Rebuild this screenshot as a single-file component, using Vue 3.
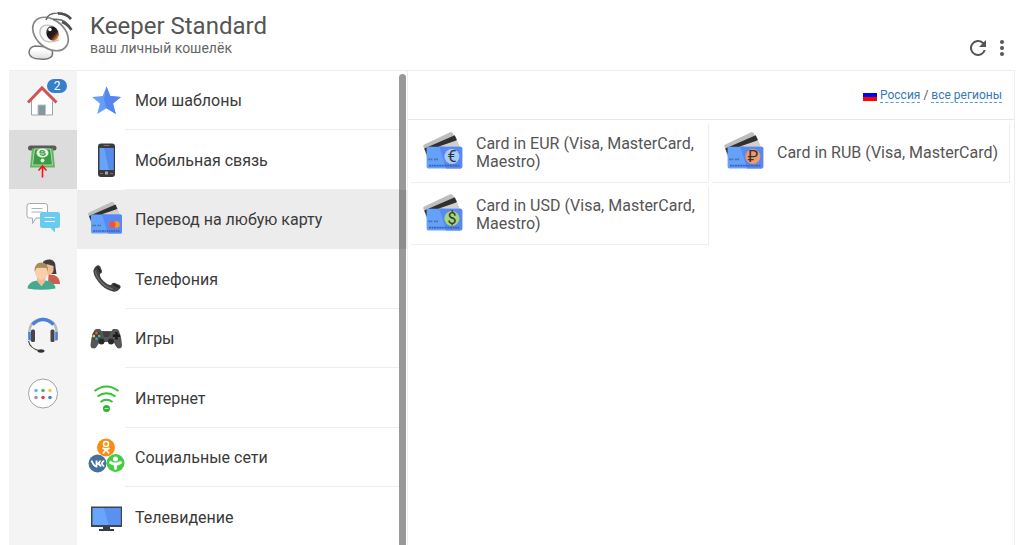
<template>
  <svg class="sprite" aria-hidden="true">
    <defs>
      <linearGradient id="eye" x1="0" y1="0" x2="0.4" y2="1">
        <stop offset="0" stop-color="#666" />
        <stop offset="0.4" stop-color="#161616" />
        <stop offset="0.75" stop-color="#33201a" />
        <stop offset="1" stop-color="#d9833a" />
      </linearGradient>
      <linearGradient id="belly" x1="0" y1="0" x2="0" y2="1">
        <stop offset="0.3" stop-color="#fff" />
        <stop offset="1" stop-color="#ddd" />
      </linearGradient>
    </defs>

    <symbol id="i-home" viewBox="0 0 40 40">
      <path d="M8.5 19 19 8.500 29.500 19V34H8.500Z" fill="#fff" />
      <path d="M8.500 20V34H29.500V20" fill="none" stroke="#9aa5ab" />
      <path d="M15 34V24H22.500V34" fill="#8797a0" stroke="#b6c0c5" />
      <path d="M5 21.500 19 7 33.500 21.500" fill="none" stroke="#d05454" stroke-width="3" />
    </symbol>
    <symbol id="i-pay" viewBox="0 0 40 40">
      <rect x="5" y="5.500" width="28.500" height="5" rx="2.500" fill="#5a5a5a" />
      <path d="M9 8.500H30L32 27.500H7Z" fill="#62b662" />
      <path d="M11.500 9H27.500L29.500 25H9.500Z" fill="#3f9a45" stroke="#a9dba5" />
      <ellipse cx="19.500" cy="13" rx="6" ry="4.500" fill="#e4f6df" />
      <path d="M22 11.500Q17 9.500 17 12.500 17 13 19.500 12.800 22.500 12.500 22 14.500 20 16 17 14.500" fill="none" stroke="#3f9a45" stroke-width="1.300" />
      <circle cx="19.500" cy="20.500" r="2" fill="#d6f0cf" />
      <path d="M19.500 37.500V25.500M15.500 30.500 19.500 26 23.500 30.500" fill="none" stroke="#f01616" stroke-width="1.600" />
    </symbol>
    <symbol id="i-chat" viewBox="0 0 40 40">
      <path d="M6.500 4.500H22Q24.500 4.500 24.500 7V16.500Q24.500 19 22 19H13L9.500 24.500V19H6.500Q4 19 4 16.500V7Q4 4.500 6.500 4.500Z" fill="#fff" stroke="#a3abb0" />
      <path d="M8.500 9.500H19.500M8.500 13H19.500" stroke="#a9b2b7" />
      <path d="M19.500 13H34.500Q37 13 37 15.500V26.500Q37 29 34.500 29H32V33.500L27.500 29H19.500Q17 29 17 26.500V15.500Q17 13 19.500 13Z" fill="#6bcbed" />
      <path d="M21.500 18.500H32M21.500 22.500H32" stroke="#e8f8fd" />
    </symbol>
    <symbol id="i-people" viewBox="0 0 40 40">
      <path d="M20 4Q22 1 27.500 1.500 33 3 32.500 9L33.500 16H20Z" fill="#403d3e" />
      <path d="M23.500 6 30.500 8V12Q30 16 26.500 16.500H23Z" fill="#eebd97" />
      <path d="M25.500 16.500 31 17Q36.500 18.500 37 26H25Z" fill="#ce5e4b" />
      <path d="M4.500 30.500Q5 24 14 22.500H23Q32 24 32.500 30.500 18.500 33 4.500 30.500Z" fill="#45a891" />
      <path d="M14 19H22.500V23L18.500 28.500 14 23Z" fill="#eebd97" />
      <path d="M12 9H24.500V15Q24 19.500 18.500 22.500 12.500 19.500 12 15Z" fill="#f9cfa9" />
      <path d="M11.500 14Q11 4.500 18.500 4.500 26 5 25 14L23.500 10Q18 9.500 13.500 10Z" fill="#a98d57" />
    </symbol>
    <symbol id="i-support" viewBox="0 0 40 40">
      <path d="M7 24Q3 2.500 20 2 37 2.500 33 24" fill="none" stroke="#b9bcbf" stroke-width="2.500" />
      <path d="M9.500 7.500Q20-2.500 30.500 7.500" fill="none" stroke="#4a7fdc" stroke-width="3.500" />
      <path d="M6.500 15V23M33.500 15V23" stroke="#4a7fdc" stroke-width="2.500" />
      <rect x="8" y="12.500" width="4" height="12.500" rx="1.500" fill="#4b4645" />
      <rect x="27.500" y="12.500" width="4" height="12.500" rx="1.500" fill="#4b4645" />
      <path d="M5.500 24Q7 31.500 16 33.500" fill="none" stroke="#505050" stroke-width="1.200" />
      <ellipse cx="18" cy="34" rx="3.500" ry="1.700" fill="#333" />
    </symbol>
    <symbol id="i-more" viewBox="0 0 40 40">
      <circle cx="20" cy="17.500" r="14.500" fill="#fff" stroke="#9ba4aa" />
      <circle cx="13" cy="14.500" r="1.800" fill="#5bc0e8" />
      <circle cx="20" cy="14.500" r="1.800" fill="#56b35a" />
      <circle cx="27" cy="14.500" r="1.800" fill="#f5c944" />
      <circle cx="13" cy="21.500" r="1.800" fill="#8f9aa1" />
      <circle cx="20" cy="21.500" r="1.800" fill="#cf4848" />
      <circle cx="27" cy="21.500" r="1.800" fill="#3a84cf" />
    </symbol>

    <symbol id="i-star" viewBox="0 0 40 40">
      <path d="M19.500 5.500 23.300 15 34 16 26 22.500 28.800 33 19.500 27.300 10.200 33 13 22.500 5 16 15.700 15Z" fill="#659ff8" />
      <path d="M19.500 5.500 23.300 15 34 16 26 22.500 28.800 33 19.500 27.300 17 19Z" fill="#5585ee" />
    </symbol>
    <symbol id="i-phone" viewBox="0 0 40 40">
      <rect x="11" y="3.500" width="17" height="33.500" rx="3" fill="#3b3b3d" />
      <rect x="12.500" y="8" width="14" height="22" fill="#67a5fa" />
      <path d="M17 8H26.500V30H22Z" fill="#568aed" />
      <path d="M16.500 5.500H22.500" stroke="#777" />
      <rect x="18" y="31.500" width="3" height="3" fill="#aaa" />
      <path d="M13 33.500H16M23 33.500H26" stroke="#777" />
    </symbol>
    <symbol id="i-card" viewBox="0 0 40 40">
      <path d="M1 14Q1 13 2 12.500L24.500 2Q26 1.500 27 3L33 15.500 4 23Z" fill="#bdbdbd" />
      <path d="M2 16 28.500 4.500 30.500 9 4 21Z" fill="#303030" />
      <path d="M14 14.500 30.500 9 33 15Z" fill="#d0d0d0" />
      <rect x="4" y="14.500" width="31" height="19" rx="1.500" fill="#64a1fb" />
      <path d="M15 14.500H33.500Q35 14.500 35 16V32Q35 33.500 33.500 33.500H21Z" fill="#5a88f2" />
      <path d="M5.500 25.500H9M10.500 25.500H14.500" stroke="#456fa9" stroke-width="1.500" stroke-dasharray="1.500 0.500" />
      <path d="M6 31H33" stroke="#3f64a8" stroke-width="1.500" stroke-dasharray="2 0.500 1.500 0.500" />
    </symbol>
    <symbol id="i-transfer" viewBox="0 0 40 40">
      <use href="#i-card" width="40" height="40" />
      <circle cx="29.500" cy="24.500" r="3.200" fill="#f79a1f" />
      <circle cx="25.300" cy="24.500" r="3.200" fill="#ee5240" />
    </symbol>
    <symbol id="i-handset" viewBox="0 0 40 40">
      <path d="M10 6.500Q12.500 5.500 13.500 8L15 12Q15.500 14 13 15 12.500 18.500 17 22.500 21.500 26.500 24 26 25.500 23 28 24L32.500 26Q34.500 27.500 33 29.500 30 33.500 26 32.500 17 30.500 11.500 23 5.500 15.500 6.500 11 7.500 7.500 10 6.500Z" fill="#444" />
      <path d="M8.500 12Q9 18 15 24 20 29 26 30" fill="none" stroke="#707070" stroke-width="1.200" />
      <path d="M10.500 8 13.500 13.500M26.500 25.500 32.500 28.500" stroke="#222" stroke-width="1.500" />
    </symbol>
    <symbol id="i-games" viewBox="0 0 40 40">
      <path d="M7 12Q7.500 10 10 10H13L14.500 12H24.500L26 10H29Q31.500 10 32 12 34.500 18 35 26 35 29.500 32 29.500 30 29.500 28.500 26.500L26.500 23H12.500L10.500 26.500Q9 29.500 7 29.500 3.500 29.500 3.500 26 4 18 7 12Z" fill="#555657" />
      <path d="M15.500 13H23.500L22 18H17Z" fill="#3f4041" />
      <circle cx="14.500" cy="22.500" r="3" fill="#29292b" />
      <circle cx="24" cy="22.500" r="3" fill="#29292b" />
      <circle cx="9.500" cy="17" r="4.500" fill="#3c3d3e" />
      <circle cx="9.500" cy="14" r="1.500" fill="#e65549" />
      <circle cx="6.800" cy="17" r="1.500" fill="#f3c33b" />
      <circle cx="12.200" cy="17" r="1.500" fill="#4fb960" />
      <circle cx="9.500" cy="19.800" r="1.500" fill="#489de8" />
      <path d="M29.500 13V20.500M25.800 16.800H33.200" stroke="#1c1c1d" stroke-width="2.500" />
    </symbol>
    <symbol id="i-wifi" viewBox="0 0 40 40">
      <path d="M7.500 13Q19.500 4 31.500 13M10.500 18.500Q19.500 12 28.500 18.500M13.500 24Q19.500 19.500 25.500 24" fill="none" stroke="#35c335" stroke-width="2" />
      <circle cx="19.500" cy="30.500" r="3.500" fill="#2fb52f" />
      <path d="M17.500 30.500H21.500" stroke="#b4eab4" />
    </symbol>
    <symbol id="i-social" viewBox="0 0 40 40">
      <circle cx="19" cy="9.500" r="9" fill="#fa8c14" />
      <circle cx="19" cy="6" r="2.500" fill="none" stroke="#fff" stroke-width="1.600" />
      <path d="M15.500 10Q19 12.500 22.500 10M19 11.500 16 15.500M19 11.500 22 15.500" fill="none" stroke="#fff" stroke-width="1.800" />
      <circle cx="10.500" cy="25.500" r="9" fill="#45709c" />
      <path d="M4.500 22.500Q6.500 28 9.500 28.500V22.500M10 26Q12.500 25 13.500 22.500M10 25.500Q12.500 25.500 14 28.500M14.500 25.500 17 22.500M14.500 25.500 17 28.500" fill="none" stroke="#fff" stroke-width="1.800" />
      <circle cx="28.500" cy="25" r="9" fill="#43cd43" />
      <circle cx="28.500" cy="21" r="2.500" fill="#fff" />
      <path d="M23.500 24.500Q28.500 28 33.500 24.500M28.500 26V30.500" fill="none" stroke="#fff" stroke-width="2.800" stroke-linecap="round" />
    </symbol>
    <symbol id="i-tv" viewBox="0 0 40 40">
      <rect x="4" y="9.500" width="31" height="20.500" fill="#3b4650" />
      <rect x="5.500" y="11" width="28" height="17" fill="#67a6fa" />
      <path d="M17 11H33.500V28H21.500Z" fill="#5a90ef" />
      <path d="M16 30H23V32H27V34H12V32H16Z" fill="#333e47" />
    </symbol>
  </svg>

  <div class="page">
    <header class="header">
      <svg class="logo" viewBox="0 0 50 54" aria-hidden="true">
        <path d="M10 37Q4 38 4 44 5 50 15 50 24 51 27 47 29 42 24 38Z" fill="url(#belly)" stroke="#777" stroke-width="1.500" />
        <ellipse cx="25.500" cy="25" rx="20" ry="14" transform="rotate(40 25.500 25)" fill="#fff" stroke="#888" stroke-width="1.700" />
        <path d="M34 31Q19 37 15 25 14 16 23 16 32 17 34 27" fill="#f8f8f8" stroke="#bbb" stroke-width="1.200" />
        <ellipse cx="27.500" cy="24.500" rx="6" ry="7.500" transform="rotate(-22 27.500 24.500)" fill="url(#eye)" />
        <circle cx="25" cy="20.500" r="1.700" fill="#fff" />
        <path d="M21 11Q23 4 32 4 42 3.500 46 10" fill="none" stroke="#666" stroke-width="1.500" />
        <path d="M33 4.500Q41 4.500 46 10" fill="none" stroke="#505050" stroke-width="2.700" />
        <path d="M28 10.500Q42 9 46 21" fill="none" stroke="#666" stroke-width="1.500" />
        <path d="M37 13Q43 15.500 46.500 21" fill="none" stroke="#505050" stroke-width="2.500" />
      </svg>
      <div class="brand">
        <h1 class="title">Keeper Standard</h1>
        <p class="subtitle">ваш личный кошелёк</p>
      </div>
      <div class="tools">
        <button class="tool" type="button" aria-label="Обновить">
          <svg viewBox="0 0 24 24">
            <path d="M17.650 6.350A8 8 0 1 0 19.730 14H17.650A6 6 0 1 1 12 6C13.660 6 15.140 6.690 16.220 7.780L13 11H20V4Z" />
          </svg>
        </button>
        <button class="tool" type="button" aria-label="Меню">
          <svg viewBox="0 0 24 24">
            <circle cx="12" cy="6" r="2" />
            <circle cx="12" cy="12" r="2" />
            <circle cx="12" cy="18" r="2" />
          </svg>
        </button>
      </div>
    </header>

    <div class="body">
      <nav class="rail">
        <button
          v-for="item in rail"
          :key="item.icon"
          class="rail-btn"
          :class="{ active: section === item.icon }"
          type="button"
          :aria-label="item.label"
          @click="section = item.icon"
        >
          <svg class="icon"><use :href="'#i-' + item.icon" /></svg>
          <span v-if="item.badge" class="badge">{{ item.badge }}</span>
        </button>
      </nav>

      <div class="categories">
        <ul class="category-list">
          <li v-for="cat in categories" :key="cat.icon" class="category-item">
            <button
              class="category"
              :class="{ active: category === cat.icon }"
              type="button"
              @click="category = cat.icon"
            >
              <svg class="icon"><use :href="'#i-' + cat.icon" /></svg>
              <span class="category-name">{{ cat.name }}</span>
            </button>
          </li>
        </ul>
        <div class="scroll-thumb"></div>
      </div>

      <main class="content">
        <div class="regions">
          <svg class="flag" viewBox="0 0 14 12" aria-hidden="true">
            <rect width="14" height="4" fill="#fff" />
            <rect y="4" width="14" height="4" fill="#00f" />
            <rect y="8" width="14" height="4" fill="#f00" />
          </svg>
          <a href="#russia">Россия</a>
          <span>/</span>
          <a href="#all">все регионы</a>
        </div>
        <div class="cards">
          <a v-for="card in cards" :key="card.sign" class="card" href="#card">
            <svg class="card-icon" viewBox="0 0 40 40" aria-hidden="true">
              <use href="#i-card" width="40" height="40" />
              <circle cx="26" cy="23" r="6.500" :fill="card.color" />
              <text class="sign" x="26" y="28" text-anchor="middle">{{ card.sign }}</text>
            </svg>
            <span>{{ card.name }}</span>
          </a>
        </div>
      </main>
    </div>
  </div>
</template>

<script setup>
import { ref } from 'vue'

const section = ref('pay')
const category = ref('transfer')

/** Разделы боковой панели */
const rail = [
  { icon: 'home', label: 'Главная', badge: 2 },
  { icon: 'pay', label: 'Оплата' },
  { icon: 'chat', label: 'Сообщения' },
  { icon: 'people', label: 'Контакты' },
  { icon: 'support', label: 'Поддержка' },
  { icon: 'more', label: 'Ещё' },
]

/** Категории платежей */
const categories = [
  { icon: 'star', name: 'Мои шаблоны' },
  { icon: 'phone', name: 'Мобильная связь' },
  { icon: 'transfer', name: 'Перевод на любую карту' },
  { icon: 'handset', name: 'Телефония' },
  { icon: 'games', name: 'Игры' },
  { icon: 'wifi', name: 'Интернет' },
  { icon: 'social', name: 'Социальные сети' },
  { icon: 'tv', name: 'Телевидение' },
]

const cards = [
  { sign: '€', name: 'Card in EUR (Visa, MasterCard, Maestro)', color: '#a6ccfb' },
  { sign: '₽', name: 'Card in RUB (Visa, MasterCard)', color: '#ef9a68' },
  { sign: '$', name: 'Card in USD (Visa, MasterCard, Maestro)', color: '#a5d778' },
]
</script>

<style>
body {
  margin: 0;
  background: #fff;
}
</style>

<style scoped>
.sprite {
  position: absolute;
  width: 0;
  height: 0;
}
.page {
  display: flex;
  flex-direction: column;
  height: 100vh;
  padding: 0 9px;
  overflow: hidden;
  box-sizing: border-box;
  font-family: Roboto, 'Liberation Sans', sans-serif;
  font-size: 16px;
  color: #3a3a3a;
}
button {
  margin: 0;
  padding: 0;
  border: 0;
  background: transparent;
  font: inherit;
  color: inherit;
  cursor: pointer;
}
.header {
  display: flex;
  flex-shrink: 0;
  height: 70px;
  border-bottom: 1px solid #eee;
}
.logo {
  width: 50px;
  height: 54px;
  margin: 9px 15px 0 16px;
}
.brand {
  flex: 1;
  padding-top: 12px;
}
.title {
  margin: 0;
  font-size: 24px;
  line-height: 28px;
  font-weight: 400;
  color: #555;
}
.subtitle {
  margin: 0;
  font-size: 14px;
  line-height: 16px;
  color: #666;
}
.tools {
  display: flex;
  padding: 36px 1px 0 0;
}
.tool {
  width: 24px;
  height: 24px;
}
.tool svg {
  display: block;
  fill: #555;
}
.body {
  display: flex;
  flex: 1;
  min-height: 0;
}
.rail {
  flex: 0 0 68px;
  background: #f4f4f4;
}
.rail-btn {
  position: relative;
  display: flex;
  align-items: center;
  justify-content: center;
  width: 100%;
  height: 59px;
}
.rail-btn.active {
  background: #dcdcdc;
}
.icon {
  flex-shrink: 0;
  width: 40px;
  height: 40px;
}
.badge {
  position: absolute;
  top: 8px;
  right: 10px;
  width: 20px;
  height: 14px;
  border-radius: 7px;
  background: #3481c9;
  font-size: 12px;
  line-height: 14px;
  color: #fff;
  text-align: center;
}
.categories {
  position: relative;
  flex: 0 0 330px;
  overflow: hidden;
}
.category-list {
  margin: 0;
  padding: 0;
  list-style: none;
}
.category-item {
  height: 60px;
}
.category-item:nth-child(odd) {
  height: 59px;
}
.category {
  display: flex;
  align-items: center;
  width: 100%;
  height: 100%;
  padding-left: 10px;
  text-align: left;
}
.category.active {
  background: #ececec;
}
.category-name {
  display: flex;
  flex: 1;
  align-items: center;
  height: 100%;
  margin: 0 8px 0 -2px;
  padding: 1px 0 0 10px;
  border-bottom: 1px solid #eee;
  box-sizing: border-box;
}
.scroll-thumb {
  position: absolute;
  top: 3px;
  right: 1px;
  bottom: -8px;
  width: 7px;
  border-radius: 4px;
  background: rgba(0, 0, 0, 0.4);
}
.content {
  flex: 1;
  min-width: 0;
  border: 1px solid #eee;
  border-width: 0 1px;
}
.regions {
  display: flex;
  align-items: center;
  justify-content: flex-end;
  gap: 3px;
  height: 48px;
  padding-right: 12px;
  border-bottom: 1px solid #e6e6e6;
  font-size: 12px;
  line-height: 14px;
  color: #555;
}
.regions a {
  border-bottom: 1px dashed #5a9bd0;
  color: #337ab7;
  text-decoration: none;
}
.flag {
  width: 14px;
  height: 12px;
}
.cards {
  display: grid;
  grid-template-columns: 1fr 1fr;
  gap: 3px;
  padding: 4px 4px 0 3px;
}
.card {
  display: flex;
  align-items: center;
  gap: 8px;
  height: 58px;
  padding: 0 4px 0 11px;
  border: 1px solid #eee;
  border-width: 0 1px 1px 0;
  line-height: 18px;
  color: #555;
  text-decoration: none;
}
.card-icon {
  flex-shrink: 0;
  width: 46px;
  height: 46px;
}
.sign {
  font-family: Roboto, 'DejaVu Sans', sans-serif;
  font-size: 14px;
  fill: #333;
}
</style>
